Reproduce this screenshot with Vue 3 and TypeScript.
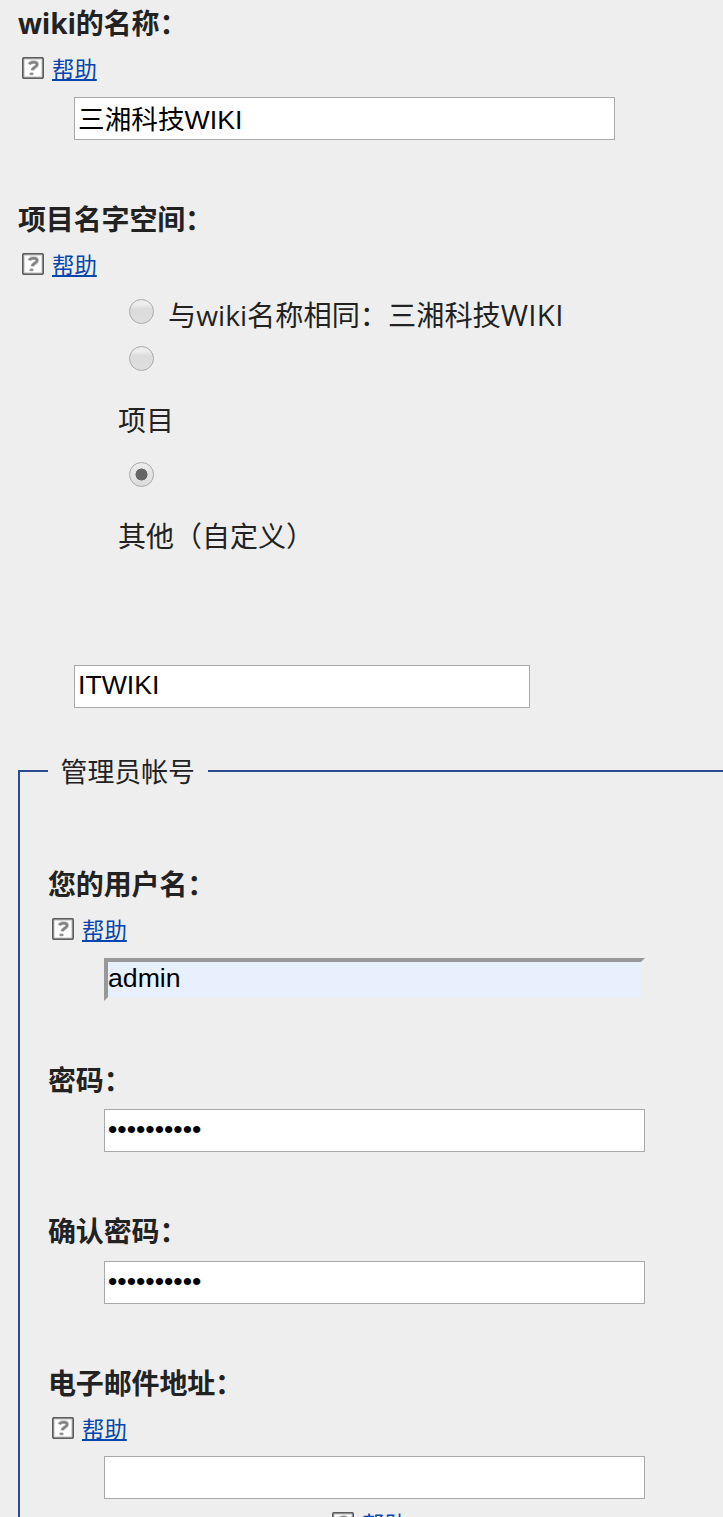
<script setup lang="ts">
import { ref, h, type FunctionalComponent } from 'vue'

const HelpLink: FunctionalComponent = () =>
  h('div', { class: 'help' }, [
    h('svg', { class: 'help-icon', width: 22, height: 22, viewBox: '0 0 22 22' }, [
      h('rect', { x: 0.9, y: 0.9, width: 20.2, height: 20.2, rx: 0.8, fill: '#fff', stroke: '#5c5c5c', 'stroke-width': 1.8 }),
      h('rect', { x: 2.2, y: 2.2, width: 17.6, height: 17.6, fill: 'none', stroke: '#c4c4c4', 'stroke-width': 0.8 }),
      h('path', { d: 'M7.2 7.6C8 4.4 15.2 4 15.2 7.4C15.2 10.2 10.6 10 10.2 13.6', fill: 'none', stroke: '#d4d4d4', 'stroke-width': 4 }),
      h('path', { d: 'M7.4 7.2C8.6 4.8 15 4.4 15.1 7.4C15.2 10 10.6 10.2 10.2 13.2', fill: 'none', stroke: '#828282', 'stroke-width': 2.6 }),
      h('ellipse', { cx: 9.5, cy: 16.9, rx: 2.2, ry: 1.3, fill: '#929292' }),
    ]),
    h('a', { class: 'help-text', href: '#' }, '帮助'),
  ])

const wikiName = ref('三湘科技WIKI')
const namespaceName = ref('ITWIKI')
const userName = ref('admin')
const password = ref('wikiadmin1')
const confirmation = ref('wikiadmin1')
const email = ref('')
const namespaceChoice = ref('other')
</script>

<template>
  <main class="page">
    <section class="block">
      <label class="title"><span class="latin">wiki</span>的名称：</label>
      <HelpLink />
      <input v-model="wikiName" class="field" type="text" />
    </section>

    <section class="block namespace">
      <label class="title">项目名字空间：</label>
      <HelpLink />
      <div class="options">
        <div class="option first">
          <input v-model="namespaceChoice" class="radio" type="radio" value="same" />
          <span class="same">与<span class="latin">wiki</span>名称相同：三湘科技<span class="latin wide">WIKI</span></span>
        </div>
        <div class="option second">
          <input v-model="namespaceChoice" class="radio" type="radio" value="project" />
        </div>
        <p class="caption">项目</p>
        <div class="option third">
          <input v-model="namespaceChoice" class="radio" type="radio" value="other" />
        </div>
        <p class="caption">其他（自定义）</p>
      </div>
      <input v-model="namespaceName" class="field short" type="text" />
    </section>

    <section class="account">
      <div class="legend-row"><span class="edge"></span><span class="legend">管理员帐号</span><span class="edge rest"></span></div>
      <div class="account-body">
        <section class="block">
          <label class="title">您的用户名：</label>
          <HelpLink />
          <input v-model="userName" class="field filled" type="text" />
        </section>
        <section class="block secret">
          <label class="title">密码：</label>
          <input v-model="password" class="field" type="password" />
        </section>
        <section class="block secret confirm">
          <label class="title">确认密码：</label>
          <input v-model="confirmation" class="field" type="password" />
        </section>
        <section class="block email">
          <label class="title">电子邮件地址：</label>
          <HelpLink />
          <input v-model="email" class="field" type="text" />
          <HelpLink class="trailing" />
        </section>
      </div>
    </section>
  </main>
</template>

<style>
body {
  background: #eee;
}
</style>

<style scoped>
.page {
  box-sizing: border-box;
  height: 1517px;
  overflow: hidden;
  padding-left: 18px;
  background: #eee;
  color: #222;
  font-family: "Noto Sans CJK SC", sans-serif;
  font-size: 28px;
}
.block {
  display: flex;
  flex-direction: column;
  align-items: flex-start;
  height: 196px;
}
.title {
  height: 46px;
  line-height: 44px;
  font-weight: 700;
  letter-spacing: -0.15px;
  white-space: nowrap;
}
.latin {
  font-family: "Open Sans", sans-serif;
}
.wide {
  font-size: 29.5px;
  line-height: 1;
  letter-spacing: 0.3px;
}
.page :deep(.help) {
  display: flex;
  align-items: flex-start;
  height: 51px;
  padding-left: 4px;
}
.page :deep(.help-icon) {
  flex: none;
  margin: 11px 8px 0 0;
}
.page :deep(.help-text) {
  height: 46px;
  line-height: 44px;
  font-size: 22.4px;
  color: #0645ad;
  text-decoration: underline;
  text-decoration-thickness: 2px;
}
.field {
  box-sizing: border-box;
  flex: none;
  width: 541px;
  height: 43px;
  margin: 0 0 0 56px;
  padding: 0 3px 2px;
  border: 1px solid #a9a9a9;
  border-radius: 0;
  background: #fff;
  color: #000;
  font: 26.67px "Liberation Sans", "Noto Sans CJK SC", sans-serif;
  outline: 0;
}
.short {
  width: 456px;
}
.filled {
  padding: 0 0 2px;
  border: 4px solid;
  border-color: #999 #eee #eee #999;
  background: #e8f0fe;
}
.namespace {
  height: 574px;
}
.options {
  display: flex;
  flex-direction: column;
  height: 372px;
  padding-left: 100px;
}
.option {
  box-sizing: border-box;
  display: flex;
  align-items: flex-start;
  padding-left: 11px;
}
.first {
  height: 53px;
  padding-top: 6px;
}
.second {
  height: 50px;
}
.third {
  height: 65px;
  padding-top: 15px;
}
.radio {
  appearance: none;
  box-sizing: border-box;
  width: 25px;
  height: 25px;
  margin: 0;
  border: 1px solid #aaa;
  border-radius: 50%;
  background: linear-gradient(#ededed 0%, #ededed 20%, #dcdcdc 38%, #dedede 100%);
}
.radio:checked {
  background: radial-gradient(circle, #666 0 5.7px, transparent 6.3px), linear-gradient(#ededed, #dcdcdc);
}
.same {
  margin: -7px 0 0 14px;
  line-height: 44px;
  font-size: 28.2px;
  white-space: nowrap;
}
.caption {
  height: 51px;
  margin: 0;
  line-height: 46px;
}
.account {
  height: 747px;
}
.legend-row {
  display: flex;
  align-items: flex-start;
  height: 2px;
}
.edge {
  width: 30px;
  height: 2px;
  background: #2a4b8d;
}
.rest {
  flex: 1;
}
.legend {
  box-sizing: border-box;
  width: 160px;
  margin-top: -21px;
  padding-left: 12.5px;
  line-height: 44px;
  font-size: 26.9px;
  white-space: nowrap;
}
.account-body {
  height: 745px;
  box-sizing: border-box;
  padding: 89px 0 0 28px;
  border-left: 2px solid #2a4b8d;
}
.secret {
  height: 152px;
}
.secret .title {
  height: 52px;
}
.confirm .title {
  line-height: 42px;
}
.email {
  margin-top: -1px;
}
.email :deep(.help) {
  height: 50px;
}
.trailing {
  margin: 2px 0 0 280px;
}
</style>
